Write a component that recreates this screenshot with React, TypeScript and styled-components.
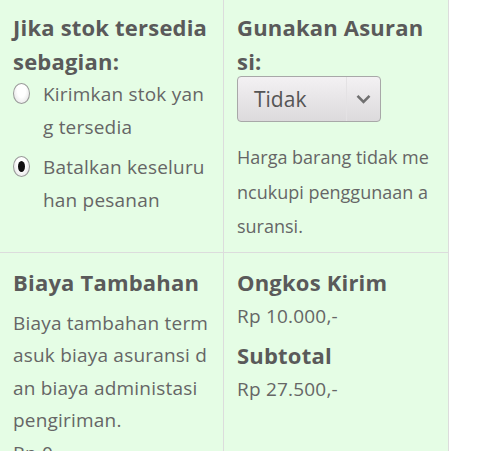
import React from "react";
import styled, { createGlobalStyle } from "styled-components";

const Global = createGlobalStyle`
  html, body { margin: 0; padding: 0; background: #ffffff; }
  body { font-family: "Open Sans", "Liberation Sans", sans-serif; }
`;

const Table = styled.div`
  width: 449px;
  display: grid;
  grid-template-columns: 224px 225px;
  background: #e5fde5;
`;

const Cell = styled.div<{ $top?: number; $last?: boolean }>`
  padding: ${(p) => p.$top ?? 10}px 14px 10px 13px;
  border-right: 1px solid #dcdcdc;
  border-bottom: ${(p) => (p.$last ? "none" : "1px solid #dcdcdc")};
  min-width: 0;
  height: ${(p) => (p.$last ? "auto" : "232px")};
  box-sizing: content-box;
`;

const Heading = styled.div<{ $mt?: number }>`
  font-weight: 700;
  font-size: 22px;
  letter-spacing: 0.2px;
  line-height: 34px;
  color: #5a5a5a;
  word-break: break-all;
  margin-top: ${(p) => p.$mt ?? 0}px;
`;

const Text = styled.div<{ $mt?: number; $lh?: number }>`
  font-size: 19px;
  letter-spacing: 0.2px;
  line-height: ${(p) => p.$lh ?? 32.4}px;
  color: #666666;
  word-break: break-all;
  margin-top: ${(p) => p.$mt ?? 0}px;
`;

const Note = styled.div`
  font-size: 18px;
  line-height: 34.5px;
  color: #666666;
  word-break: break-all;
  margin-top: 18px;
`;

const Option = styled.label`
  display: flex;
  align-items: flex-start;
  gap: 13px;
  margin-bottom: 7px;
`;

const Radio = styled.span<{ $checked?: boolean }>`
  flex: none;
  width: 15px;
  height: 19px;
  margin-top: 5px;
  border-radius: 50%;
  border: 1px solid #9a9a9a;
  background: radial-gradient(ellipse at 50% 30%, #ffffff 40%, #dcdcdc 100%);
  display: flex;
  align-items: center;
  justify-content: center;
  box-sizing: content-box;
  &::after {
    content: "";
    display: ${(p) => (p.$checked ? "block" : "none")};
    width: 7px;
    height: 11px;
    border-radius: 50%;
    background: #111111;
  }
`;

const OptionText = styled.span`
  font-size: 19px;
  letter-spacing: 0.2px;
  line-height: 33px;
  color: #666666;
  word-break: break-all;
  min-width: 0;
`;

const Select = styled.div`
  margin-top: -2px;
  width: 144px;
  height: 46px;
  box-sizing: border-box;
  border: 1px solid #a8a8a8;
  border-radius: 4px;
  background: linear-gradient(#f3f1f3, #dcdadc);
  display: flex;
  align-items: center;
  font-size: 21px;
  color: #555555;
`;

const SelectValue = styled.span`
  flex: 1;
  padding-left: 16px;
`;

const SelectArrow = styled.span`
  width: 33px;
  height: 100%;
  border-left: 1px solid #e4e2e4;
  display: flex;
  align-items: center;
  justify-content: center;
`;

export default function App() {
  return (
    <>
      <Global />
      <Table>
        <Cell>
          <Heading>Jika stok tersedia sebagian:</Heading>
          <Option>
            <Radio />
            <OptionText>Kirimkan stok yang tersedia</OptionText>
          </Option>
          <Option>
            <Radio $checked />
            <OptionText>Batalkan keseluruhan pesanan</OptionText>
          </Option>
        </Cell>
        <Cell>
          <Heading>Gunakan Asuransi:</Heading>
          <Select>
            <SelectValue>Tidak</SelectValue>
            <SelectArrow>
              <svg width="15" height="10" viewBox="0 0 15 10">
                <path d="M1.5 1.8 L7.5 7.8 L13.5 1.8" fill="none" stroke="#707070" strokeWidth="2.6" />
              </svg>
            </SelectArrow>
          </Select>
          <Note>Harga barang tidak mencukupi penggunaan asuransi.</Note>
        </Cell>
        <Cell $top={12} $last>
          <Heading>Biaya Tambahan</Heading>
          <Text $mt={8}>Biaya tambahan termasuk biaya asuransi dan biaya administasi pengiriman.</Text>
          <Text>Rp 0,-</Text>
        </Cell>
        <Cell $top={12} $last>
          <Heading>Ongkos Kirim</Heading>
          <Text $lh={34}>Rp 10.000,-</Text>
          <Heading $mt={5}>Subtotal</Heading>
          <Text $lh={34}>Rp 27.500,-</Text>
        </Cell>
      </Table>
    </>
  );
}
